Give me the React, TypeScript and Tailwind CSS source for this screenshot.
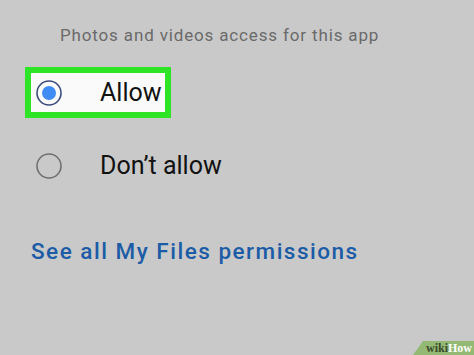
import React from "react";

function Radio({ checked }: { checked: boolean }) {
  return (
    <svg width="26" height="26" viewBox="0 0 26 26" className="shrink-0">
      <circle
        cx="13"
        cy="13"
        r="12"
        fill="none"
        stroke={checked ? "#3c4c7e" : "#707070"}
        strokeWidth="1.6"
      />
      {checked && <circle cx="13" cy="13" r="7" fill="#3f8cf4" />}
    </svg>
  );
}

export default function App() {
  return (
    <div
      className="relative w-[474px] h-[355px] overflow-hidden bg-[#c9c9c9] flex flex-col"
      style={{ fontFamily: "Roboto, 'Noto Sans', sans-serif" }}
    >
      <div className="pl-[60px] pt-[25px] text-[17px] leading-[20px] tracking-[0.85px] text-[#6a6a6a]">
        Photos and videos access for this app
      </div>

      <div className="ml-[25px] mt-[22px] w-[146px] h-[51px] border-[6px] border-[#2de526] bg-[#fafafa] flex items-center">
        <div className="ml-[5px]">
          <Radio checked />
        </div>
        <span className="ml-[38px] text-[25px] leading-[30px] text-[#111]">Allow</span>
      </div>

      <div className="ml-[36px] mt-[33px] flex items-center h-[30px]">
        <Radio checked={false} />
        <span className="ml-[38px] text-[25px] leading-[30px] text-[#111]">Don’t allow</span>
      </div>

      <div className="pl-[31px] mt-[57px] text-[22.5px] leading-[26px] font-medium tracking-[1.5px] text-[#1c5ca6]">
        See all My Files permissions
      </div>

      <div className="absolute right-0 bottom-0 w-[61px] h-[14px]">
        <svg width="61" height="14" viewBox="0 0 61 14" className="absolute inset-0">
          <polygon points="10,0 61,0 61,14 0,14" fill="#93b975" />
        </svg>
        <div
          className="absolute right-[2px] bottom-[0px] text-[12px] leading-[14px] font-bold"
          style={{ fontFamily: "'Liberation Serif', serif" }}
        >
          <span className="text-[#3a4a2a]">wiki</span>
          <span className="text-white">How</span>
        </div>
      </div>
    </div>
  );
}
